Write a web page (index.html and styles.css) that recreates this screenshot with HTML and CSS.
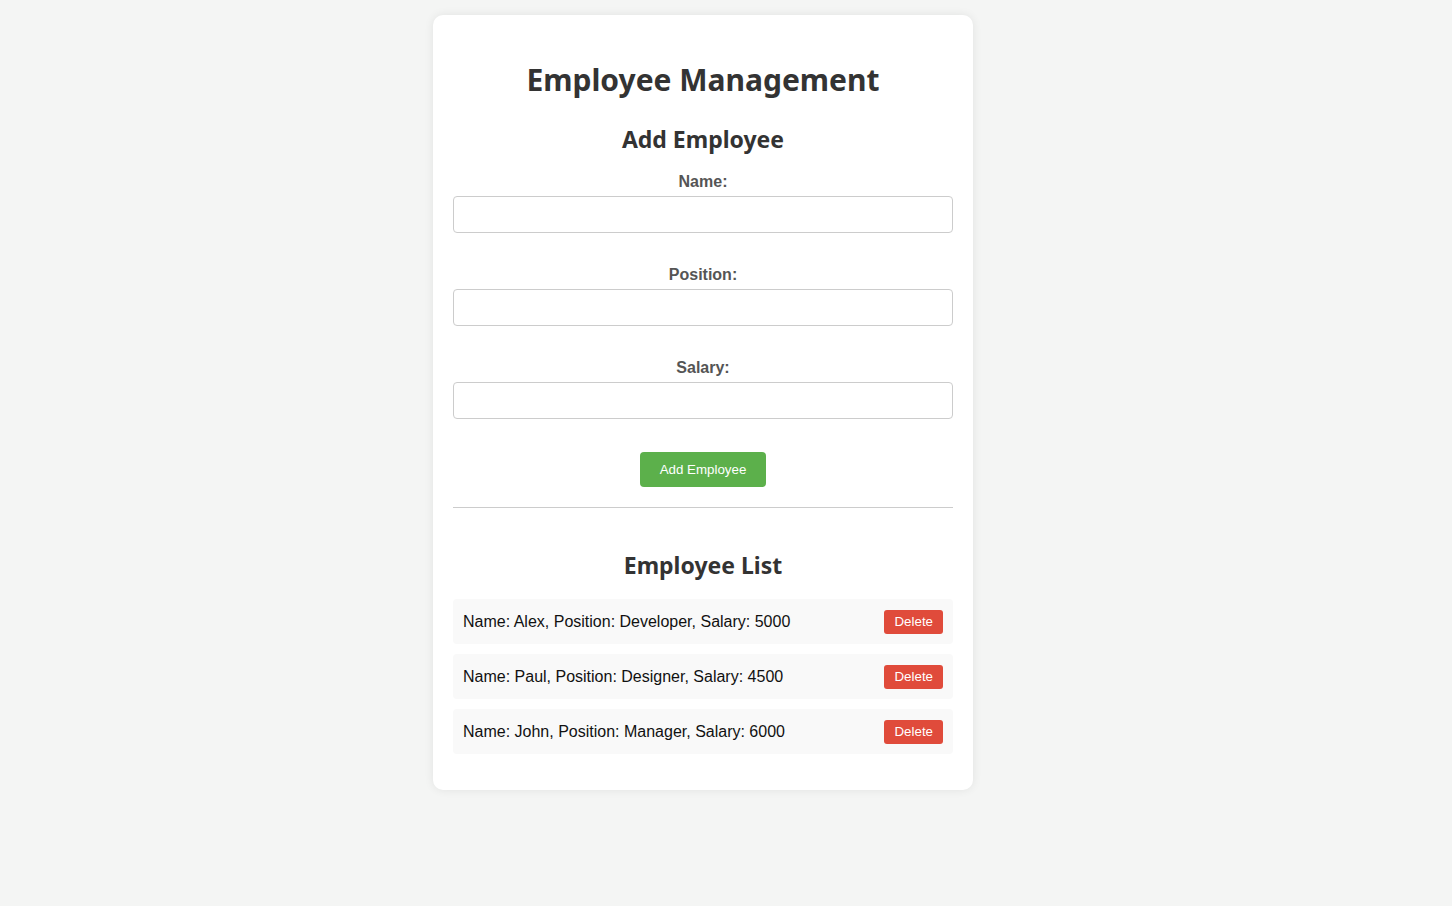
FILE: index.html
```html
<!DOCTYPE html>
<html lang="en">
<head>
    <meta charset="UTF-8">
    <meta name="viewport" content="width=device-width, initial-scale=1.0">
    <title>Employee Management</title>
    <link rel="stylesheet" href="styles.css">
</head>
<body>
    <div class="container">
        <h1>Employee Management</h1>

        <h2>Add Employee</h2>
        <form id="employeeForm">
            <div class="form-group">
                <label for="name">Name:</label>
                <input type="text" id="name">
            </div>
            <div class="form-group">
                <label for="position">Position:</label>
                <input type="text" id="position">
            </div>
            <div class="form-group">
                <label for="salary">Salary:</label>
                <input type="number" id="salary">
            </div>
            <button type="submit" class="add-btn">Add Employee</button>
        </form>

        <hr>

        <div class="list-section">
            <h2>Employee List</h2>
            <ul id="employeeList">
                <li>
                    <span>Name: Alex, Position: Developer, Salary: 5000</span>
                    <button class="delete-btn">Delete</button>
                </li>
                <li>
                    <span>Name: Paul, Position: Designer, Salary: 4500</span>
                    <button class="delete-btn">Delete</button>
                </li>
                <li>
                    <span>Name: John, Position: Manager, Salary: 6000</span>
                    <button class="delete-btn">Delete</button>
                </li>
            </ul>
        </div>
    </div>
</body>
</html>
```

FILE: styles.css
```css
body {
    margin: 0;
    padding: 15px 46px 15px 0;
    background-color: #f4f5f4;
    font-family: "Liberation Sans", Arial, sans-serif;
}
.container {
    width: 500px;
    margin: 0 auto;
    padding: 20px;
    background: #fff;
    border-radius: 10px;
    box-shadow: 0 0 10px rgba(0, 0, 0, 0.08);
}
h1, h2 {
    font-family: "Noto Sans", "Open Sans", sans-serif;
    color: #333;
    text-align: center;
}
h1 {
    font-size: 30px;
    line-height: 42px;
    margin: 24px 0 22px;
}
h2 {
    font-size: 23px;
    margin: 0 0 18px;
}
.form-group {
    text-align: center;
    margin-bottom: 33px;
}
label {
    display: block;
    font-weight: bold;
    color: #555;
    margin-bottom: 5px;
}
input {
    display: block;
    width: 100%;
    box-sizing: border-box;
    height: 37px;
    padding: 8px;
    border: 1px solid #ccc;
    border-radius: 4px;
    font-size: 16px;
}
.add-btn {
    display: block;
    margin: 0 auto;
    height: 35px;
    padding: 0 20px;
    background-color: #5cb04b;
    color: #fff;
    border: none;
    border-radius: 4px;
    font-family: "Liberation Sans", Arial, sans-serif;
    font-size: 13.33px;
    cursor: pointer;
}
hr {
    border: none;
    border-top: 1px solid #ccc;
    margin: 20px 0;
}
.list-section {
    padding-top: 21px;
}
ul {
    list-style: none;
    padding: 0;
    margin: 16px 0 16px;
}
li {
    display: flex;
    justify-content: space-between;
    align-items: center;
    height: 45px;
    box-sizing: border-box;
    padding: 0 10px;
    margin-bottom: 10px;
    background: #f9f9f9;
    border-radius: 4px;
    font-size: 16px;
    color: #111;
}
li:last-child {
    margin-bottom: 0;
}
.delete-btn {
    height: 24px;
    padding: 0 10px;
    background-color: #e04b3b;
    color: #fff;
    border: none;
    border-radius: 3px;
    font-family: "Liberation Sans", Arial, sans-serif;
    font-size: 13.33px;
    cursor: pointer;
}
```
